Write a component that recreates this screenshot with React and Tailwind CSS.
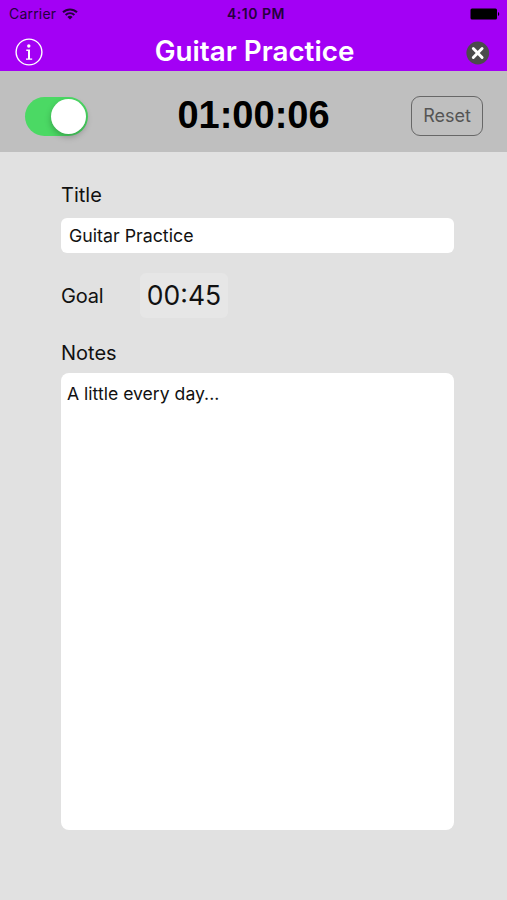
import { useState } from "react";

const StatusBar = () => (
    <div className="grid grid-cols-3 items-center h-7 pl-[9px] pr-[7px] text-[#25003d]">
        <div className="flex items-center gap-[6px]">
            <span className="text-[14px] leading-7 tracking-[0.2px]">Carrier</span>
            <svg width="16" height="12" viewBox="0 0 16 12" fill="none" stroke="currentColor">
                <path d="M1 4.3a10 10 0 0 1 14 0" strokeWidth="2" />
                <path d="M3.6 7a6.2 6.2 0 0 1 8.8 0" strokeWidth="1.9" />
                <path d="M8 11.6 5.4 9a3.7 3.7 0 0 1 5.2 0z" fill="currentColor" stroke="none" />
            </svg>
        </div>
        <span className="pl-[3px] text-center text-[14px] font-semibold leading-7 tracking-[0.5px]">4:10 PM</span>
        <svg className="justify-self-end" width="30" height="12" viewBox="0 0 30 12" fill="#000">
            <rect x="0.5" y="0.5" width="26.5" height="11" rx="1.5" />
            <path d="M28 4a2.2 2.2 0 0 1 0 4z" />
        </svg>
    </div>
);

const NavBar = ({ title }) => (
    <div className="flex items-center justify-between h-[43px] pl-[15px] pr-[17px]">
        <button type="button" aria-label="Info" className="mt-[5px]">
            <svg width="28" height="28" viewBox="0 0 28 28" fill="none" stroke="#fff">
                <circle cx="14" cy="14" r="12.9" strokeWidth="1.4" />
                <circle cx="13.8" cy="8" r="1.7" fill="#fff" stroke="none" />
                <path d="M11.3 12.2h3v8.5M11 21.1h6.2" strokeWidth="1.4" />
                <path d="M14 12v9" strokeWidth="2" />
            </svg>
        </button>
        <h1 className="pt-[3px] text-[27.8px] leading-10 font-semibold text-white">{title}</h1>
        <button type="button" aria-label="Close" className="mt-[7px]">
            <svg width="24" height="24" viewBox="0 0 24 24" fill="none">
                <circle cx="11.8" cy="12" r="11.4" fill="#4b4b4b" />
                <path d="M7.3 7.5l8.8 9M16.1 7.5l-8.8 9" stroke="#fff" strokeWidth="2.9" strokeLinecap="round" />
            </svg>
        </button>
    </div>
);

const Toggle = ({ on, onChange }) => (
    <button
        type="button"
        role="switch"
        aria-checked={on}
        onClick={() => onChange(!on)}
        className={`flex items-center w-[63px] h-[39px] mt-[2px] p-[2px] rounded-full ${on ? "justify-end bg-[#4bd964]" : "justify-start bg-gray-300"}`}
    >
        <span className="size-[35px] rounded-full bg-white shadow-[0_3px_6px_rgba(0,0,0,0.25)]"></span>
    </button>
);

const App = () => {
    const [running, setRunning] = useState(true);
    const [title, setTitle] = useState("Guitar Practice");
    const [notes, setNotes] = useState("A little every day...");

    return (
        <div className="flex flex-col w-full h-screen overflow-hidden bg-[#e1e1e1] text-[#111] font-['Inter',sans-serif]">
            <header className="h-[71px] shrink-0 bg-[#a300f5]">
                <StatusBar />
                <NavBar title={title} />
            </header>

            {/* Timer controls */}
            <div className="flex items-center justify-between h-[81px] shrink-0 pl-[25px] pr-6 pt-[7px] bg-[#bfbfbf]">
                <Toggle on={running} onChange={setRunning} />
                <span className="pb-px pl-2 text-[38px] leading-10 font-bold text-black font-['Liberation_Sans',sans-serif]">01:00:06</span>
                <button type="button" className="w-[72px] h-10 mt-px rounded-[9px] border-[1.5px] border-[#676767] text-[18px] text-[#555]">
                    Reset
                </button>
            </div>

            <main className="flex flex-col pl-[61px] pr-[53px] pt-[29px]">
                <label htmlFor="title" className="text-[20px] leading-7">Title</label>
                <input
                    id="title"
                    type="text"
                    value={title}
                    onChange={(e) => setTitle(e.target.value)}
                    className="mt-[9px] h-[35px] px-2 rounded-md bg-white text-[17.8px] outline-none"
                />

                <div className="flex items-center mt-5 h-[45px]">
                    <span className="w-[79px] text-[20px] leading-7 tracking-[-0.2px]">Goal</span>
                    <span className="w-[88px] h-[45px] rounded-md bg-[#e6e6e6] text-center text-[26.5px] leading-[45px]">00:45</span>
                </div>

                <label htmlFor="notes" className="mt-[21px] text-[20px] leading-7">Notes</label>
                <textarea
                    id="notes"
                    value={notes}
                    onChange={(e) => setNotes(e.target.value)}
                    className="mt-[6px] h-[457px] px-[6px] py-[9px] rounded-lg bg-white text-[17.6px] leading-6 outline-none resize-none"
                />
            </main>
        </div>
    );
};

export default App;
